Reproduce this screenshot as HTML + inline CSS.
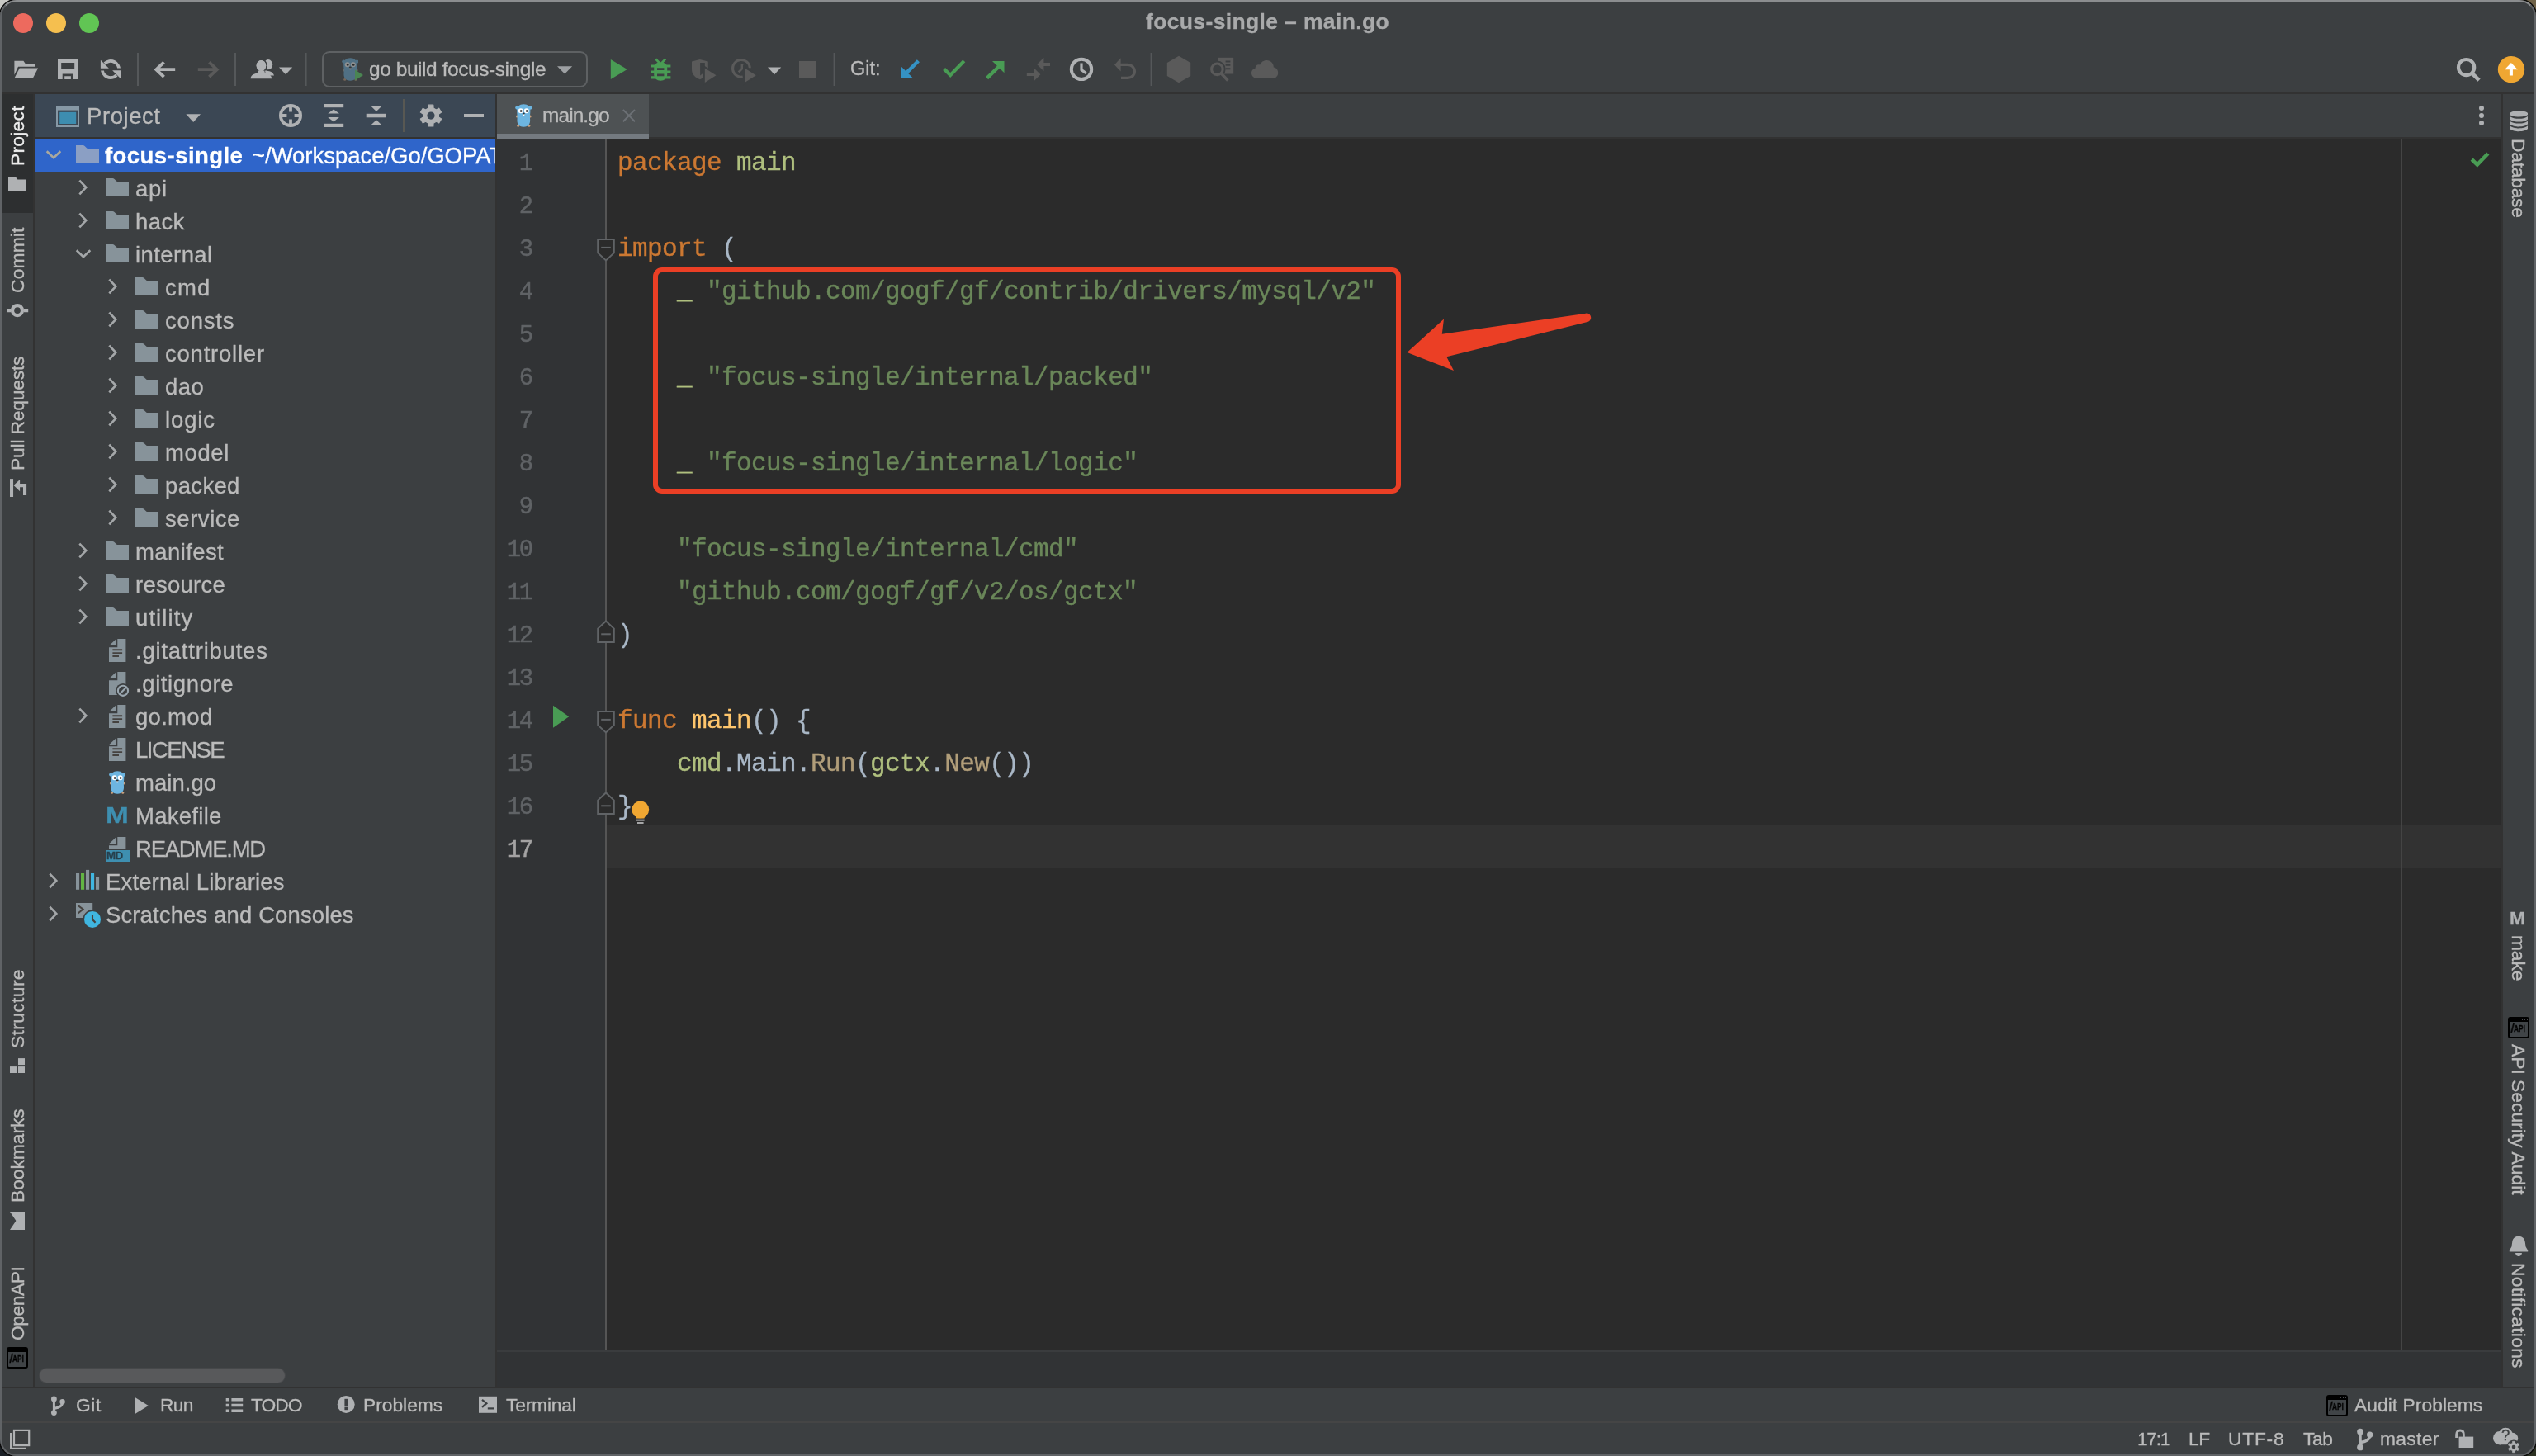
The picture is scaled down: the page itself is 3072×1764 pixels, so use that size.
<!DOCTYPE html>
<html lang="en"><head><meta charset="utf-8"><title>focus-single – main.go</title>
<style>
html,body{margin:0;padding:0;background:#1d2127;}
body{width:3072px;height:1764px;position:relative;overflow:hidden;}
#win{position:absolute;left:0;top:0;width:3072px;height:1764px;border-radius:20px;overflow:hidden;background:#3c3f41;}
.r{position:absolute;display:block;}
.t{position:absolute;white-space:pre;line-height:1;will-change:transform;-webkit-text-stroke:0.3px;}
.cl{will-change:transform;position:absolute;left:748px;white-space:pre;line-height:1;font-family:"Liberation Mono",monospace;font-size:31px;letter-spacing:-0.6px;color:#a9b7c6;-webkit-text-stroke:0.35px;}
.k{color:#cc7832}.s{color:#6a8759}.p{color:#afbf7e}.fd{color:#ffc66d}.fc{color:#b09d79}
.ln{will-change:transform;-webkit-text-stroke:0.45px;position:absolute;white-space:pre;line-height:1;font-family:"Liberation Mono",monospace;color:#606366;text-align:right;}
</style></head><body>
<div class="r" style="left:0px;top:0px;width:40px;height:40px;background:#c9c9c5;"></div>
<div class="r" style="left:3032px;top:0px;width:40px;height:40px;background:#6f6248;"></div>
<div class="r" style="left:0px;top:1724px;width:40px;height:40px;background:#1a1f25;"></div>
<div class="r" style="left:3032px;top:1724px;width:40px;height:40px;background:#2c3122;"></div>
<div id="win">
<div class="r" style="left:0px;top:112px;width:3072px;height:2px;background:#323232;"></div>
<div class="r" style="left:2px;top:114px;width:38px;height:144px;background:#2d2f30;"></div>
<div class="r" style="left:40px;top:114px;width:2px;height:1566px;background:#323232;"></div>
<div class="r" style="left:42px;top:114px;width:558px;height:52px;background:#3b4754;"></div>
<div class="r" style="left:42px;top:166px;width:558px;height:2px;background:#323232;"></div>
<div class="r" style="left:42px;top:168px;width:558px;height:40px;background:#2f65ca;"></div>
<div class="r" style="left:600px;top:114px;width:2px;height:1566px;background:#323232;"></div>
<div class="r" style="left:602px;top:166px;width:2428px;height:2px;background:#323232;"></div>
<div class="r" style="left:602px;top:114px;width:184px;height:48px;background:#4e5254;"></div>
<div class="r" style="left:602px;top:162px;width:184px;height:6px;background:#747a80;"></div>
<div class="r" style="left:602px;top:168px;width:131px;height:1468px;background:#313335;"></div>
<div class="r" style="left:735px;top:168px;width:2295px;height:1468px;background:#2b2b2b;"></div>
<div class="r" style="left:733px;top:168px;width:2px;height:1468px;background:#555555;"></div>
<div class="r" style="left:735px;top:1000px;width:2295px;height:52px;background:#323232;"></div>
<div class="r" style="left:2908px;top:168px;width:2px;height:1468px;background:#444444;"></div>
<div class="r" style="left:602px;top:1636px;width:2428px;height:2px;background:#3a3c3e;"></div>
<div class="r" style="left:602px;top:1638px;width:2428px;height:42px;background:#313335;"></div>
<div class="r" style="left:3030px;top:114px;width:2px;height:1566px;background:#323232;"></div>
<div class="r" style="left:0px;top:1680px;width:3072px;height:2px;background:#323232;"></div>
<div class="r" style="left:0px;top:1722px;width:3072px;height:2px;background:#454545;"></div>
<svg class="r" style="left:53px;top:178.6px;" width="24" height="16" viewBox="0 0 24 16"><path d="M3.7 4.3 L12 12.3 L20.3 4.3" fill="none" stroke="#aaa89e" stroke-width="2.6"/></svg>
<svg class="r" style="left:92px;top:176.2px;" width="28" height="22" viewBox="0 0 28 22"><path d="M0 0 H8.4 Q9.6 0 10.6 1 L13.2 3.4 Q13.8 3.9 14.6 3.9 H28 V22 H0 Z" fill="#8b9fc4"/></svg>
<span class="t" style="left:127.40px;top:174.52px;font-family:'Liberation Sans',sans-serif;font-size:27.5px;font-weight:700;color:#ffffff;letter-spacing:0.441px;">focus-single</span>
<div class="r" style="left:300px;top:168px;width:300px;height:40px;overflow:hidden">
<span class="t" style="left:5.00px;top:6.52px;font-family:'Liberation Sans',sans-serif;font-size:27.5px;color:#ffffff;letter-spacing:-0.03px;">~/Workspace/Go/GOPATH</span>
</div>
<svg class="r" style="left:92.1px;top:215px;" width="16" height="24" viewBox="0 0 16 24"><path d="M4.3 3.7 L12.3 12 L4.3 20.3" fill="none" stroke="#a4a7a9" stroke-width="2.6"/></svg>
<svg class="r" style="left:128px;top:216px;" width="28" height="22" viewBox="0 0 28 22"><path d="M0 0 H8.4 Q9.6 0 10.6 1 L13.2 3.4 Q13.8 3.9 14.6 3.9 H28 V22 H0 Z" fill="#87939a"/></svg>
<span class="t" style="left:164.10px;top:214.52px;font-family:'Liberation Sans',sans-serif;font-size:27.5px;color:#bbbbbb;letter-spacing:0.752px;">api</span>
<svg class="r" style="left:92.1px;top:255px;" width="16" height="24" viewBox="0 0 16 24"><path d="M4.3 3.7 L12.3 12 L4.3 20.3" fill="none" stroke="#a4a7a9" stroke-width="2.6"/></svg>
<svg class="r" style="left:128px;top:256px;" width="28" height="22" viewBox="0 0 28 22"><path d="M0 0 H8.4 Q9.6 0 10.6 1 L13.2 3.4 Q13.8 3.9 14.6 3.9 H28 V22 H0 Z" fill="#87939a"/></svg>
<span class="t" style="left:164.10px;top:254.52px;font-family:'Liberation Sans',sans-serif;font-size:27.5px;color:#bbbbbb;letter-spacing:0.405px;">hack</span>
<svg class="r" style="left:89px;top:298.6px;" width="24" height="16" viewBox="0 0 24 16"><path d="M3.7 4.3 L12 12.3 L20.3 4.3" fill="none" stroke="#a4a7a9" stroke-width="2.6"/></svg>
<svg class="r" style="left:128px;top:296px;" width="28" height="22" viewBox="0 0 28 22"><path d="M0 0 H8.4 Q9.6 0 10.6 1 L13.2 3.4 Q13.8 3.9 14.6 3.9 H28 V22 H0 Z" fill="#87939a"/></svg>
<span class="t" style="left:164.10px;top:294.52px;font-family:'Liberation Sans',sans-serif;font-size:27.5px;color:#bbbbbb;letter-spacing:0.430px;">internal</span>
<svg class="r" style="left:128.1px;top:335px;" width="16" height="24" viewBox="0 0 16 24"><path d="M4.3 3.7 L12.3 12 L4.3 20.3" fill="none" stroke="#a4a7a9" stroke-width="2.6"/></svg>
<svg class="r" style="left:164px;top:336px;" width="28" height="22" viewBox="0 0 28 22"><path d="M0 0 H8.4 Q9.6 0 10.6 1 L13.2 3.4 Q13.8 3.9 14.6 3.9 H28 V22 H0 Z" fill="#87939a"/></svg>
<span class="t" style="left:200.10px;top:334.52px;font-family:'Liberation Sans',sans-serif;font-size:27.5px;color:#bbbbbb;letter-spacing:1.225px;">cmd</span>
<svg class="r" style="left:128.1px;top:375px;" width="16" height="24" viewBox="0 0 16 24"><path d="M4.3 3.7 L12.3 12 L4.3 20.3" fill="none" stroke="#a4a7a9" stroke-width="2.6"/></svg>
<svg class="r" style="left:164px;top:376px;" width="28" height="22" viewBox="0 0 28 22"><path d="M0 0 H8.4 Q9.6 0 10.6 1 L13.2 3.4 Q13.8 3.9 14.6 3.9 H28 V22 H0 Z" fill="#87939a"/></svg>
<span class="t" style="left:200.10px;top:374.52px;font-family:'Liberation Sans',sans-serif;font-size:27.5px;color:#bbbbbb;letter-spacing:0.805px;">consts</span>
<svg class="r" style="left:128.1px;top:415px;" width="16" height="24" viewBox="0 0 16 24"><path d="M4.3 3.7 L12.3 12 L4.3 20.3" fill="none" stroke="#a4a7a9" stroke-width="2.6"/></svg>
<svg class="r" style="left:164px;top:416px;" width="28" height="22" viewBox="0 0 28 22"><path d="M0 0 H8.4 Q9.6 0 10.6 1 L13.2 3.4 Q13.8 3.9 14.6 3.9 H28 V22 H0 Z" fill="#87939a"/></svg>
<span class="t" style="left:200.10px;top:414.52px;font-family:'Liberation Sans',sans-serif;font-size:27.5px;color:#bbbbbb;letter-spacing:0.778px;">controller</span>
<svg class="r" style="left:128.1px;top:455px;" width="16" height="24" viewBox="0 0 16 24"><path d="M4.3 3.7 L12.3 12 L4.3 20.3" fill="none" stroke="#a4a7a9" stroke-width="2.6"/></svg>
<svg class="r" style="left:164px;top:456px;" width="28" height="22" viewBox="0 0 28 22"><path d="M0 0 H8.4 Q9.6 0 10.6 1 L13.2 3.4 Q13.8 3.9 14.6 3.9 H28 V22 H0 Z" fill="#87939a"/></svg>
<span class="t" style="left:200.10px;top:454.52px;font-family:'Liberation Sans',sans-serif;font-size:27.5px;color:#bbbbbb;letter-spacing:0.511px;">dao</span>
<svg class="r" style="left:128.1px;top:495px;" width="16" height="24" viewBox="0 0 16 24"><path d="M4.3 3.7 L12.3 12 L4.3 20.3" fill="none" stroke="#a4a7a9" stroke-width="2.6"/></svg>
<svg class="r" style="left:164px;top:496px;" width="28" height="22" viewBox="0 0 28 22"><path d="M0 0 H8.4 Q9.6 0 10.6 1 L13.2 3.4 Q13.8 3.9 14.6 3.9 H28 V22 H0 Z" fill="#87939a"/></svg>
<span class="t" style="left:200.10px;top:494.52px;font-family:'Liberation Sans',sans-serif;font-size:27.5px;color:#bbbbbb;letter-spacing:0.861px;">logic</span>
<svg class="r" style="left:128.1px;top:535px;" width="16" height="24" viewBox="0 0 16 24"><path d="M4.3 3.7 L12.3 12 L4.3 20.3" fill="none" stroke="#a4a7a9" stroke-width="2.6"/></svg>
<svg class="r" style="left:164px;top:536px;" width="28" height="22" viewBox="0 0 28 22"><path d="M0 0 H8.4 Q9.6 0 10.6 1 L13.2 3.4 Q13.8 3.9 14.6 3.9 H28 V22 H0 Z" fill="#87939a"/></svg>
<span class="t" style="left:200.10px;top:534.52px;font-family:'Liberation Sans',sans-serif;font-size:27.5px;color:#bbbbbb;letter-spacing:0.601px;">model</span>
<svg class="r" style="left:128.1px;top:575px;" width="16" height="24" viewBox="0 0 16 24"><path d="M4.3 3.7 L12.3 12 L4.3 20.3" fill="none" stroke="#a4a7a9" stroke-width="2.6"/></svg>
<svg class="r" style="left:164px;top:576px;" width="28" height="22" viewBox="0 0 28 22"><path d="M0 0 H8.4 Q9.6 0 10.6 1 L13.2 3.4 Q13.8 3.9 14.6 3.9 H28 V22 H0 Z" fill="#87939a"/></svg>
<span class="t" style="left:200.10px;top:574.52px;font-family:'Liberation Sans',sans-serif;font-size:27.5px;color:#bbbbbb;letter-spacing:0.346px;">packed</span>
<svg class="r" style="left:128.1px;top:615px;" width="16" height="24" viewBox="0 0 16 24"><path d="M4.3 3.7 L12.3 12 L4.3 20.3" fill="none" stroke="#a4a7a9" stroke-width="2.6"/></svg>
<svg class="r" style="left:164px;top:616px;" width="28" height="22" viewBox="0 0 28 22"><path d="M0 0 H8.4 Q9.6 0 10.6 1 L13.2 3.4 Q13.8 3.9 14.6 3.9 H28 V22 H0 Z" fill="#87939a"/></svg>
<span class="t" style="left:200.10px;top:614.52px;font-family:'Liberation Sans',sans-serif;font-size:27.5px;color:#bbbbbb;letter-spacing:0.550px;">service</span>
<svg class="r" style="left:92.1px;top:655px;" width="16" height="24" viewBox="0 0 16 24"><path d="M4.3 3.7 L12.3 12 L4.3 20.3" fill="none" stroke="#a4a7a9" stroke-width="2.6"/></svg>
<svg class="r" style="left:128px;top:656px;" width="28" height="22" viewBox="0 0 28 22"><path d="M0 0 H8.4 Q9.6 0 10.6 1 L13.2 3.4 Q13.8 3.9 14.6 3.9 H28 V22 H0 Z" fill="#87939a"/></svg>
<span class="t" style="left:164.10px;top:654.52px;font-family:'Liberation Sans',sans-serif;font-size:27.5px;color:#bbbbbb;letter-spacing:0.397px;">manifest</span>
<svg class="r" style="left:92.1px;top:695px;" width="16" height="24" viewBox="0 0 16 24"><path d="M4.3 3.7 L12.3 12 L4.3 20.3" fill="none" stroke="#a4a7a9" stroke-width="2.6"/></svg>
<svg class="r" style="left:128px;top:696px;" width="28" height="22" viewBox="0 0 28 22"><path d="M0 0 H8.4 Q9.6 0 10.6 1 L13.2 3.4 Q13.8 3.9 14.6 3.9 H28 V22 H0 Z" fill="#87939a"/></svg>
<span class="t" style="left:164.10px;top:694.52px;font-family:'Liberation Sans',sans-serif;font-size:27.5px;color:#bbbbbb;letter-spacing:0.245px;">resource</span>
<svg class="r" style="left:92.1px;top:735px;" width="16" height="24" viewBox="0 0 16 24"><path d="M4.3 3.7 L12.3 12 L4.3 20.3" fill="none" stroke="#a4a7a9" stroke-width="2.6"/></svg>
<svg class="r" style="left:128px;top:736px;" width="28" height="22" viewBox="0 0 28 22"><path d="M0 0 H8.4 Q9.6 0 10.6 1 L13.2 3.4 Q13.8 3.9 14.6 3.9 H28 V22 H0 Z" fill="#87939a"/></svg>
<span class="t" style="left:164.10px;top:734.52px;font-family:'Liberation Sans',sans-serif;font-size:27.5px;color:#bbbbbb;letter-spacing:1.091px;">utility</span>
<svg class="r" style="left:131.8px;top:774px;" width="21" height="28" viewBox="0 0 21 28"><path d="M10.3 0 H20.4 V28 H0 V10.3 H10.3 Z" fill="#87939a"/><path d="M0.4 8 L8.3 0.6 V8 Z" fill="#87939a"/><path d="M4.4 13.2 H16.1 M4.4 17.1 H16.1 M4.4 21 H12" stroke="#45423f" stroke-width="1.9" fill="none"/></svg>
<span class="t" style="left:164.10px;top:774.52px;font-family:'Liberation Sans',sans-serif;font-size:27.5px;color:#bbbbbb;letter-spacing:0.778px;">.gitattributes</span>
<svg class="r" style="left:131.8px;top:814px;" width="26" height="32" viewBox="0 0 26 32"><path d="M10.3 0 H20.4 V28 H0 V10.3 H10.3 Z" fill="#87939a"/><path d="M0.4 8 L8.3 0.6 V8 Z" fill="#87939a"/><circle cx="17" cy="22.8" r="8.9" fill="#3c3f41"/><circle cx="17" cy="22.8" r="6.1" fill="none" stroke="#9aa7b0" stroke-width="2.1"/><path d="M12.8 27 L21.2 18.6" stroke="#9aa7b0" stroke-width="2.1"/></svg>
<span class="t" style="left:164.10px;top:814.52px;font-family:'Liberation Sans',sans-serif;font-size:27.5px;color:#bbbbbb;letter-spacing:0.609px;">.gitignore</span>
<svg class="r" style="left:92.1px;top:855px;" width="16" height="24" viewBox="0 0 16 24"><path d="M4.3 3.7 L12.3 12 L4.3 20.3" fill="none" stroke="#a4a7a9" stroke-width="2.6"/></svg>
<svg class="r" style="left:131.8px;top:854px;" width="21" height="28" viewBox="0 0 21 28"><path d="M10.3 0 H20.4 V28 H0 V10.3 H10.3 Z" fill="#87939a"/><path d="M0.4 8 L8.3 0.6 V8 Z" fill="#87939a"/><path d="M4.4 13.2 H16.1 M4.4 17.1 H16.1 M4.4 21 H12" stroke="#45423f" stroke-width="1.9" fill="none"/></svg>
<span class="t" style="left:164.10px;top:854.52px;font-family:'Liberation Sans',sans-serif;font-size:27.5px;color:#bbbbbb;letter-spacing:0.297px;">go.mod</span>
<svg class="r" style="left:131.8px;top:894px;" width="21" height="28" viewBox="0 0 21 28"><path d="M10.3 0 H20.4 V28 H0 V10.3 H10.3 Z" fill="#87939a"/><path d="M0.4 8 L8.3 0.6 V8 Z" fill="#87939a"/><path d="M4.4 13.2 H16.1 M4.4 17.1 H16.1 M4.4 21 H12" stroke="#45423f" stroke-width="1.9" fill="none"/></svg>
<span class="t" style="left:164.10px;top:894.52px;font-family:'Liberation Sans',sans-serif;font-size:27.5px;color:#bbbbbb;letter-spacing:-1.497px;">LICENSE</span>
<svg class="r" style="left:131.8px;top:934px;" width="20.4" height="28" viewBox="0 0 20.4 28"><g><ellipse cx="2.2" cy="15" rx="1.3" ry="1.5" fill="#c8a07e"/><ellipse cx="18.2" cy="15" rx="1.3" ry="1.5" fill="#c8a07e"/><ellipse cx="3.6" cy="26.4" rx="1.5" ry="1.3" fill="#c8a07e"/><ellipse cx="16.8" cy="26.4" rx="1.5" ry="1.3" fill="#c8a07e"/><circle cx="2.2" cy="4.6" r="2.1" fill="#6db5e0"/><circle cx="18.2" cy="4.6" r="2.1" fill="#6db5e0"/><path d="M10.2 0.3 C15.5 0.3 18.3 3.4 18.3 8 C18.3 11.5 17.6 14 18 18.5 C18.4 23.5 16.5 27.7 10.2 27.7 C3.9 27.7 2 23.5 2.4 18.5 C2.8 14 2.1 11.5 2.1 8 C2.1 3.4 4.9 0.3 10.2 0.3 Z" fill="#6db5e0"/><circle cx="6.7" cy="8.3" r="3" fill="#fff"/><circle cx="13.7" cy="8.3" r="3" fill="#fff"/><circle cx="7.1" cy="8.5" r="1.35" fill="#111"/><circle cx="14.1" cy="8.5" r="1.35" fill="#111"/><rect x="9.3" y="12" width="1.9" height="2.3" rx="0.5" fill="#fff"/><ellipse cx="10.2" cy="11.6" rx="1.5" ry="1" fill="#2a2a2a"/><ellipse cx="10.2" cy="12.2" rx="2.1" ry="0.9" fill="#c8a07e" opacity="0.0"/></g></svg>
<span class="t" style="left:164.10px;top:934.52px;font-family:'Liberation Sans',sans-serif;font-size:27.5px;color:#bbbbbb;letter-spacing:0.046px;">main.go</span>
<span class="t" style="left:127.60px;top:974.29px;font-family:'Liberation Sans',sans-serif;font-size:28px;font-weight:700;color:#3e8fb0;transform:scaleX(1.19);transform-origin:0 0;">M</span>
<span class="t" style="left:164.10px;top:974.52px;font-family:'Liberation Sans',sans-serif;font-size:27.5px;color:#bbbbbb;letter-spacing:0.272px;">Makefile</span>
<svg class="r" style="left:131.8px;top:1014px;" width="21" height="15" viewBox="0 0 21 15"><path d="M10.3 0 H20.4 V14 H0 V10.3 H10.3 Z" fill="#87939a"/><path d="M0.4 8 L8.3 0.6 V8 Z" fill="#87939a"/></svg>
<div class="r" style="left:128px;top:1030px;width:30px;height:14px;background:#3e8fb0;"></div>
<span class="t" style="left:129.40px;top:1030.45px;font-family:'Liberation Sans',sans-serif;font-size:13.4px;font-weight:700;color:#27404d;letter-spacing:-0.639px;">MD</span>
<span class="t" style="left:164.10px;top:1014.52px;font-family:'Liberation Sans',sans-serif;font-size:27.5px;color:#bbbbbb;letter-spacing:-1.233px;">README.MD</span>
<svg class="r" style="left:55.8px;top:1055px;" width="16" height="24" viewBox="0 0 16 24"><path d="M4.3 3.7 L12.3 12 L4.3 20.3" fill="none" stroke="#a4a7a9" stroke-width="2.6"/></svg>
<svg class="r" style="left:92px;top:1053px;" width="29" height="26" viewBox="0 0 29 26"><rect x="0" y="5" width="4.1" height="19.8" fill="#87939a"/><rect x="6" y="5" width="4.1" height="19.8" fill="#62b543"/><rect x="12" y="0.9" width="4.1" height="23.9" fill="#87939a"/><rect x="18" y="5" width="4.1" height="19.8" fill="#40b6e0"/><rect x="24" y="9" width="4.1" height="15.8" fill="#87939a"/></svg>
<span class="t" style="left:128.10px;top:1054.52px;font-family:'Liberation Sans',sans-serif;font-size:27.5px;color:#bbbbbb;letter-spacing:0.149px;">External Libraries</span>
<svg class="r" style="left:55.8px;top:1095px;" width="16" height="24" viewBox="0 0 16 24"><path d="M4.3 3.7 L12.3 12 L4.3 20.3" fill="none" stroke="#a4a7a9" stroke-width="2.6"/></svg>
<svg class="r" style="left:92px;top:1093px;" width="32" height="32" viewBox="0 0 32 32"><rect x="0" y="1" width="20.2" height="18" fill="#87939a"/><path d="M2.5 4 L8.6 8.6 L2.5 13.5" fill="none" stroke="#45423f" stroke-width="2"/><circle cx="20" cy="20.9" r="11.6" fill="#3c3f41"/><circle cx="20" cy="20.9" r="10" fill="#40b6e0"/><path d="M20 15.4 V21 L23.6 24.8" fill="none" stroke="#45423f" stroke-width="2.1"/></svg>
<span class="t" style="left:128.10px;top:1094.52px;font-family:'Liberation Sans',sans-serif;font-size:27.5px;color:#bbbbbb;letter-spacing:0.121px;">Scratches and Consoles</span>
<svg class="r" style="left:68px;top:128px;" width="28" height="26" viewBox="0 0 28 26"><rect x="1" y="1" width="26" height="24" fill="none" stroke="#8698a5" stroke-width="2"/><rect x="0" y="0" width="28" height="5.6" fill="#8698a5"/><rect x="4.2" y="7.8" width="20" height="14.2" fill="#3d8db0"/></svg>
<span class="t" style="left:105.20px;top:126.72px;font-family:'Liberation Sans',sans-serif;font-size:27.5px;color:#bbbbbb;letter-spacing:0.569px;">Project</span>
<svg class="r" style="left:224px;top:136px;" width="20" height="14" viewBox="0 0 20 14"><path d="M1.4 2.2 H19 L10.2 12 Z" fill="#afb1b3"/></svg>
<svg class="r" style="left:336px;top:124px;" width="32" height="32" viewBox="0 0 32 32"><circle cx="16" cy="16" r="12.1" fill="none" stroke="#afb1b3" stroke-width="3.8"/><path d="M16 4 V11.4 M16 20.6 V28 M4 16 H11.4 M20.6 16 H28" stroke="#afb1b3" stroke-width="3.8" fill="none"/></svg>
<svg class="r" style="left:390px;top:124px;" width="28" height="32" viewBox="0 0 28 32"><rect x="2" y="2" width="24.2" height="4.2" fill="#afb1b3"/><rect x="2" y="25.8" width="24.2" height="4.2" fill="#afb1b3"/><path d="M7.2 13.6 L14.1 8.6 L21 13.6 Z M7.2 18 L14.1 23.6 L21 18 Z" fill="#afb1b3"/></svg>
<svg class="r" style="left:442px;top:124px;" width="28" height="32" viewBox="0 0 28 32"><rect x="1.7" y="13.8" width="24.3" height="4.5" fill="#afb1b3"/><path d="M6.8 4.1 H21 L13.9 11 Z M6.8 28 H21 L13.9 21.2 Z" fill="#afb1b3"/></svg>
<div class="r" style="left:488px;top:120px;width:2px;height:40px;background:#585853;"></div>
<svg class="r" style="left:506px;top:124px;" width="32" height="32" viewBox="0 0 32 32"><path d="M12.98 6.99 L13.16 3.21 L18.84 3.21 L19.02 6.99 L22.38 8.93 L25.74 7.20 L28.58 12.11 L25.40 14.16 L25.40 18.04 L28.58 20.09 L25.74 25.00 L22.38 23.27 L19.02 25.21 L18.84 28.99 L13.16 28.99 L12.98 25.21 L9.62 23.27 L6.26 25.00 L3.42 20.09 L6.60 18.04 L6.60 14.16 L3.42 12.11 L6.26 7.20 L9.62 8.93 Z" fill="#afb1b3" stroke="#afb1b3" stroke-width="1.2" stroke-linejoin="round"/><circle cx="16" cy="16.1" r="4.6" fill="#3b4754"/></svg>
<div class="r" style="left:561.7px;top:137.7px;width:24.6px;height:4.6px;background:#afb1b3;"></div>
<div class="r" style="left:48px;top:1657.5px;width:296.5px;height:17px;border-radius:9px;background:#58595b;box-shadow:0 0 0 1px #46484a;"></div>
<div class="r" style="left:16.0px;top:16.0px;width:24.4px;height:24.4px;border-radius:50%;background:#ed6a5e"></div>
<div class="r" style="left:56.0px;top:16.0px;width:24.4px;height:24.4px;border-radius:50%;background:#f5bf4f"></div>
<div class="r" style="left:96.0px;top:16.0px;width:24.4px;height:24.4px;border-radius:50%;background:#61c554"></div>
<span class="t" style="left:1388.40px;top:13.16px;font-family:'Liberation Sans',sans-serif;font-size:26.5px;font-weight:700;color:#a9aaab;letter-spacing:0.357px;">focus-single – main.go</span>
<svg class="r" style="left:0px;top:56px;" width="3072" height="56" viewBox="0 56 3072 56"><path d="M17.4 73.7 H28.4 L31 77.6 H42.3 V80.8 H22 L17.4 90.7 Z" fill="#afb1b3" /><path d="M23.7 82.4 H46.1 L40.2 94 H17.8 Z" fill="#afb1b3" /><path d="M70 72 H94 V96 H70 Z M74.2 75.9 V84 H90.2 V75.9 Z M75.7 89.6 V96 H88.3 V89.6 Z" fill="#afb1b3" fill-rule="evenodd"/><path d="M78.2 92.2 H85.9 V96 H78.2 Z" fill="#afb1b3" /><clipPath id="rfa"><rect x="118" y="66" width="32" height="16.4"/></clipPath><clipPath id="rfb"><rect x="118" y="85.5" width="32" height="16"/></clipPath><path d="M126.89 76.89 A10.05 10.05 0 0 1 143.95 85.40" fill="none" stroke="#afb1b3" stroke-width="3.9" clip-path="url(#rfa)"/><path d="M141.11 91.11 A10.05 10.05 0 0 1 124.05 82.60" fill="none" stroke="#afb1b3" stroke-width="3.9" clip-path="url(#rfb)"/><path d="M121.9 72.7 V82.7 H131.9 Z" fill="#afb1b3" /><path d="M146.1 95.3 V85.3 H136.1 Z" fill="#afb1b3" /><rect x="166" y="64" width="2" height="40" fill="#55585a"/><rect x="284" y="64" width="2" height="40" fill="#55585a"/><rect x="369.6" y="64" width="2" height="40" fill="#55585a"/><rect x="1009.6" y="64" width="2" height="40" fill="#55585a"/><rect x="1393.6" y="64" width="2" height="40" fill="#55585a"/><path d="M212.2 84.2 H189.5 M198.6 75.3 L189.2 84.2 L198.6 93.1" fill="none" stroke="#afb1b3" stroke-width="3.8" /><path d="M239.8 84.2 H262.5 M253.4 75.3 L262.8 84.2 L253.4 93.1" fill="none" stroke="#5a5a5a" stroke-width="3.8" /><ellipse cx="324.9" cy="78.2" rx="5.3" ry="6.1" fill="#afb1b3"/><path d="M321 85.2 C326 86 330.6 86.6 332 91.4 H322 Z" fill="#afb1b3" /><ellipse cx="316.4" cy="79.5" rx="6.6" ry="7.3" fill="#afb1b3" stroke="#3c3f41" stroke-width="1.6"/><path d="M303.6 95.3 C303.9 91.2 306.5 90.2 310.5 88.8 C312 88.2 312.4 87.2 312.4 85.4 H320.4 C320.4 87.2 320.8 88.2 322.3 88.8 C326.3 90.2 328.9 91.2 329.2 95.3 Z" fill="#afb1b3" /><ellipse cx="316.4" cy="79.5" rx="5.8" ry="6.5" fill="#afb1b3"/><path d="M338 81.6 H354.2 L346.1 90.2 Z" fill="#afb1b3" /><rect x="391" y="63" width="320" height="42" rx="8" ry="8" fill="none" stroke="#5e6163" stroke-width="2"/><path d="M675 80.2 H693.2 L684.1 89.6 Z" fill="#9da0a3" /><path d="M739.8 72 L759.8 84 L739.8 96 Z" fill="#499c54" /><path d="M788 78.5 H812.4 V81.6 H788 Z M788 85.5 H812.4 V88.7 H788 Z M788 92.3 H812.4 V95.4 H788 Z" fill="#499c54" /><path d="M794.2 71.4 L799 76.4 M806.2 71.4 L801.4 76.4" fill="none" stroke="#499c54" stroke-width="2.8" /><path d="M800.2 75.2 C805.4 75.2 808.2 78.4 808.2 82 V90 C808.2 94.6 804.8 97.7 800.2 97.7 C795.6 97.7 792.2 94.6 792.2 90 V82 C792.2 78.4 795 75.2 800.2 75.2 Z" fill="#499c54" /><path d="M796 82.3 H804.4 V85 H796 Z M796 89.5 H804.4 V92.2 H796 Z" fill="#3c3f41" /><path d="M847.8 72.1 L857.8 74.4 V84 C857.8 90 853.6 94 847.8 96.2 C842 94 838 90 838 84 V74.4 Z" fill="#5a5a5a" /><path d="M848.1 76.1 H853.8 V87 L848.1 91.6 Z" fill="#3c3f41" /><path d="M853.8 82.5 L867.5 91.2 L853.8 99.9 Z" fill="#5a5a5a" stroke="#3c3f41" stroke-width="4" paint-order="stroke" stroke-linejoin="miter"/><path d="M899.71 93.04 A10.4 10.4 0 1 1 908.29 82.26" fill="none" stroke="#5a5a5a" stroke-width="3" /><path d="M899 77 V82.9 L894.8 87.4" fill="none" stroke="#5a5a5a" stroke-width="2.8" /><path d="M902 82.5 L915.8 91.2 L902 99.9 Z" fill="#5a5a5a" stroke="#3c3f41" stroke-width="4" paint-order="stroke" stroke-linejoin="miter"/><path d="M930 81.6 H946.2 L938.1 90.2 Z" fill="#afb1b3" /><path d="M968 74 H988 V94 H968 Z" fill="#5a5a5a" /><path d="M1112.4 73.8 L1097.6 88.6" fill="none" stroke="#3592c4" stroke-width="4.4" /><path d="M1091.6 80.6 V94.3 H1105.6 Z" fill="#3592c4" /><path d="M1143.6 83.4 L1151.2 91 L1167.8 73.9" fill="none" stroke="#499c54" stroke-width="4.2" /><path d="M1195.6 94.6 L1210.6 80" fill="none" stroke="#499c54" stroke-width="4.4" /><path d="M1202 74 H1216.5 V88.2 Z" fill="#499c54" /><path d="M1256.2 78 L1264.4 69.8 V76.1 H1272 V79.9 H1264.4 V86.2 Z" fill="#5a5a5a" /><path d="M1260.4 90.2 L1252.2 82 V88.3 H1243.8 V92.1 H1252.2 V98.4 Z" fill="#5a5a5a" /><circle cx="1310" cy="83.9" r="12.2" fill="none" stroke="#afb1b3" stroke-width="4"/><path d="M1310 76.6 V84.6 L1315.6 88.6" fill="none" stroke="#afb1b3" stroke-width="3.2" /><path d="M1350 78.4 L1357.6 70.2 V86.6 Z" fill="#5a5a5a" /><path d="M1357 78.4 H1366.2 C1371.2 78.4 1374.4 82.2 1374.4 86.4 C1374.4 90.8 1371.2 94.4 1366.2 94.4 H1358" fill="none" stroke="#5a5a5a" stroke-width="3.4" /><path d="M1428 67.8 L1442.2 75.9 V92.1 L1428 100.2 L1413.8 92.1 V75.9 Z" fill="#5a5a5a" /><path d="M1476 69.8 H1494.2 V89.5 H1476 Z" fill="#5a5a5a" /><path d="M1484.6 74.4 H1490.4 M1484.6 78.8 H1490.4 M1484.6 83.2 H1490.4" fill="none" stroke="#3c3f41" stroke-width="2" /><circle cx="1474.4" cy="83.8" r="10.2" fill="#3c3f41"/><circle cx="1474.4" cy="83.8" r="6.8" fill="none" stroke="#5a5a5a" stroke-width="3.1"/><path d="M1479.4 89 L1487.4 97.4" fill="none" stroke="#5a5a5a" stroke-width="3.6" /><path d="M1523.2 95 C1518.6 95 1516 92 1516 88.6 C1516 85.2 1518.4 83.2 1520.6 82.8 C1520.4 79.4 1523.4 77.2 1526.2 78.6 C1527.4 75.2 1530.6 72.9 1534.4 72.9 C1539.6 72.9 1543 76.8 1542.8 81.6 C1546 82 1548.2 84.8 1548.2 88.2 C1548.2 92 1545.4 95 1541.4 95 Z" fill="#5a5a5a" /><circle cx="2987.6" cy="81.6" r="9.6" fill="none" stroke="#afb1b3" stroke-width="4.2"/><path d="M2994.6 88.8 L3003 97.2" fill="none" stroke="#afb1b3" stroke-width="4.6" /><circle cx="3042" cy="84.1" r="16.2" fill="#f0a732"/><path d="M3034 84.2 L3041.9 76 L3049.8 84.2 H3043.9 V91.6 H3039.9 V84.2 Z" fill="#ffffff" /></svg>
<svg class="r" style="left:413.9px;top:70px;opacity:0.42;" width="20.6" height="28" viewBox="0 0 20.4 28"><g><ellipse cx="2.2" cy="15" rx="1.3" ry="1.5" fill="#c8a07e"/><ellipse cx="18.2" cy="15" rx="1.3" ry="1.5" fill="#c8a07e"/><ellipse cx="3.6" cy="26.4" rx="1.5" ry="1.3" fill="#c8a07e"/><ellipse cx="16.8" cy="26.4" rx="1.5" ry="1.3" fill="#c8a07e"/><circle cx="2.2" cy="4.6" r="2.1" fill="#6db5e0"/><circle cx="18.2" cy="4.6" r="2.1" fill="#6db5e0"/><path d="M10.2 0.3 C15.5 0.3 18.3 3.4 18.3 8 C18.3 11.5 17.6 14 18 18.5 C18.4 23.5 16.5 27.7 10.2 27.7 C3.9 27.7 2 23.5 2.4 18.5 C2.8 14 2.1 11.5 2.1 8 C2.1 3.4 4.9 0.3 10.2 0.3 Z" fill="#6db5e0"/><circle cx="6.7" cy="8.3" r="3" fill="#fff"/><circle cx="13.7" cy="8.3" r="3" fill="#fff"/><circle cx="7.1" cy="8.5" r="1.35" fill="#111"/><circle cx="14.1" cy="8.5" r="1.35" fill="#111"/><rect x="9.3" y="12" width="1.9" height="2.3" rx="0.5" fill="#fff"/><ellipse cx="10.2" cy="11.6" rx="1.5" ry="1" fill="#2a2a2a"/><ellipse cx="10.2" cy="12.2" rx="2.1" ry="0.9" fill="#c8a07e" opacity="0.0"/></g></svg>
<svg class="r" style="left:429px;top:84px;" width="12" height="14" viewBox="0 0 12 14"><path d="M1 0.4 L11 7 L1 13.6 Z" fill="#4a8552"/></svg>
<span class="t" style="left:447.20px;top:72.26px;font-family:'Liberation Sans',sans-serif;font-size:24.5px;color:#bbbbbb;letter-spacing:-0.442px;">go build focus-single</span>
<span class="t" style="left:1029.60px;top:72.40px;font-family:'Liberation Sans',sans-serif;font-size:23.5px;color:#bbbbbb;letter-spacing:-0.019px;">Git:</span>
<svg class="r" style="left:623.6px;top:126px;" width="20.6" height="28" viewBox="0 0 20.4 28"><g><ellipse cx="2.2" cy="15" rx="1.3" ry="1.5" fill="#c8a07e"/><ellipse cx="18.2" cy="15" rx="1.3" ry="1.5" fill="#c8a07e"/><ellipse cx="3.6" cy="26.4" rx="1.5" ry="1.3" fill="#c8a07e"/><ellipse cx="16.8" cy="26.4" rx="1.5" ry="1.3" fill="#c8a07e"/><circle cx="2.2" cy="4.6" r="2.1" fill="#6db5e0"/><circle cx="18.2" cy="4.6" r="2.1" fill="#6db5e0"/><path d="M10.2 0.3 C15.5 0.3 18.3 3.4 18.3 8 C18.3 11.5 17.6 14 18 18.5 C18.4 23.5 16.5 27.7 10.2 27.7 C3.9 27.7 2 23.5 2.4 18.5 C2.8 14 2.1 11.5 2.1 8 C2.1 3.4 4.9 0.3 10.2 0.3 Z" fill="#6db5e0"/><circle cx="6.7" cy="8.3" r="3" fill="#fff"/><circle cx="13.7" cy="8.3" r="3" fill="#fff"/><circle cx="7.1" cy="8.5" r="1.35" fill="#111"/><circle cx="14.1" cy="8.5" r="1.35" fill="#111"/><rect x="9.3" y="12" width="1.9" height="2.3" rx="0.5" fill="#fff"/><ellipse cx="10.2" cy="11.6" rx="1.5" ry="1" fill="#2a2a2a"/><ellipse cx="10.2" cy="12.2" rx="2.1" ry="0.9" fill="#c8a07e" opacity="0.0"/></g></svg>
<span class="t" style="left:657.20px;top:127.56px;font-family:'Liberation Sans',sans-serif;font-size:24.5px;color:#bbbbbb;letter-spacing:-0.942px;">main.go</span>
<svg class="r" style="left:752px;top:130px;" width="20" height="20" viewBox="0 0 20 20"><path d="M2.8 3 L17 17.2 M17 3 L2.8 17.2" fill="none" stroke="#6c7075" stroke-width="2"/></svg>
<div class="r" style="left:3002.8px;top:127.7px;width:6.4px;height:6.4px;border-radius:50%;background:#afb1b3"></div>
<div class="r" style="left:3002.8px;top:136.70000000000002px;width:6.4px;height:6.4px;border-radius:50%;background:#afb1b3"></div>
<div class="r" style="left:3002.8px;top:145.8px;width:6.4px;height:6.4px;border-radius:50%;background:#afb1b3"></div>
<svg class="r" style="left:2990px;top:180px;" width="30" height="26" viewBox="0 0 30 26"><path d="M4.2 13.2 L10.8 19.6 L23.8 6" fill="none" stroke="#499c54" stroke-width="4.6"/></svg>
<div class="cl" style="top:182.25px"><span class="k">package</span> <span class="p">main</span></div>
<div class="ln" style="left:560px;width:83.6px;top:183.78px;font-size:29px;letter-spacing:-2.5px;color:#606366">1</div>
<div class="ln" style="left:560px;width:83.6px;top:235.78px;font-size:29px;letter-spacing:-2.5px;color:#606366">2</div>
<div class="cl" style="top:286.25px"><span class="k">import</span> (</div>
<div class="ln" style="left:560px;width:83.6px;top:287.78px;font-size:29px;letter-spacing:-2.5px;color:#606366">3</div>
<div class="cl" style="top:338.25px">    <span class="p">_</span> <span class="s">"github.com/gogf/gf/contrib/drivers/mysql/v2"</span></div>
<div class="ln" style="left:560px;width:83.6px;top:339.78px;font-size:29px;letter-spacing:-2.5px;color:#606366">4</div>
<div class="ln" style="left:560px;width:83.6px;top:391.78px;font-size:29px;letter-spacing:-2.5px;color:#606366">5</div>
<div class="cl" style="top:442.25px">    <span class="p">_</span> <span class="s">"focus-single/internal/packed"</span></div>
<div class="ln" style="left:560px;width:83.6px;top:443.78px;font-size:29px;letter-spacing:-2.5px;color:#606366">6</div>
<div class="ln" style="left:560px;width:83.6px;top:495.78px;font-size:29px;letter-spacing:-2.5px;color:#606366">7</div>
<div class="cl" style="top:546.25px">    <span class="p">_</span> <span class="s">"focus-single/internal/logic"</span></div>
<div class="ln" style="left:560px;width:83.6px;top:547.78px;font-size:29px;letter-spacing:-2.5px;color:#606366">8</div>
<div class="ln" style="left:560px;width:83.6px;top:599.78px;font-size:29px;letter-spacing:-2.5px;color:#606366">9</div>
<div class="cl" style="top:650.25px">    <span class="s">"focus-single/internal/cmd"</span></div>
<div class="ln" style="left:560px;width:83.6px;top:651.78px;font-size:29px;letter-spacing:-2.5px;color:#606366">10</div>
<div class="cl" style="top:702.25px">    <span class="s">"github.com/gogf/gf/v2/os/gctx"</span></div>
<div class="ln" style="left:560px;width:83.6px;top:703.78px;font-size:29px;letter-spacing:-2.5px;color:#606366">11</div>
<div class="cl" style="top:754.25px">)</div>
<div class="ln" style="left:560px;width:83.6px;top:755.78px;font-size:29px;letter-spacing:-2.5px;color:#606366">12</div>
<div class="ln" style="left:560px;width:83.6px;top:807.78px;font-size:29px;letter-spacing:-2.5px;color:#606366">13</div>
<div class="cl" style="top:858.25px"><span class="k">func</span> <span class="fd">main</span>() {</div>
<div class="ln" style="left:560px;width:83.6px;top:859.78px;font-size:29px;letter-spacing:-2.5px;color:#606366">14</div>
<div class="cl" style="top:910.25px">    <span class="p">cmd</span>.Main.<span class="fc">Run</span>(<span class="p">gctx</span>.<span class="fc">New</span>())</div>
<div class="ln" style="left:560px;width:83.6px;top:911.78px;font-size:29px;letter-spacing:-2.5px;color:#606366">15</div>
<div class="cl" style="top:962.25px">}</div>
<div class="ln" style="left:560px;width:83.6px;top:963.78px;font-size:29px;letter-spacing:-2.5px;color:#606366">16</div>
<div class="ln" style="left:560px;width:83.6px;top:1015.78px;font-size:29px;letter-spacing:-2.5px;color:#a4a3a3">17</div>
<div class="r" style="left:791px;top:324px;width:894px;height:262px;border:6px solid #eb3f25;border-radius:11px;"></div>
<svg class="r" style="left:1690px;top:360px;" width="260" height="110" viewBox="0 0 260 110"><path d="M14.5 67.1 L59 26.5 L56.8 44.7 L229.6 19.9 A5.3 5.3 0 0 1 234 29.8 L62.3 72.3 L71 88.9 Z" fill="#eb3f25"/></svg>
<svg class="r" style="left:721px;top:287px;" width="26" height="32" viewBox="0 0 26 32"><path d="M3.2 3 H22.8 V19.4 L13 28.4 L3.2 19.4 Z" fill="#2b2b2b" stroke="#606366" stroke-width="2"/><path d="M7.2 12.9 H18.8" stroke="#606366" stroke-width="2"/></svg>
<svg class="r" style="left:721px;top:748.8px;" width="26" height="32" viewBox="0 0 26 32"><path d="M3.2 29 H22.8 V12.6 L13 3.4 L3.2 12.6 Z" fill="#2b2b2b" stroke="#606366" stroke-width="2"/><path d="M7.2 19.3 H18.8" stroke="#606366" stroke-width="2"/></svg>
<svg class="r" style="left:721px;top:859.2px;" width="26" height="32" viewBox="0 0 26 32"><path d="M3.2 3 H22.8 V19.4 L13 28.4 L3.2 19.4 Z" fill="#2b2b2b" stroke="#606366" stroke-width="2"/><path d="M7.2 12.9 H18.8" stroke="#606366" stroke-width="2"/></svg>
<svg class="r" style="left:721px;top:956.8px;" width="26" height="32" viewBox="0 0 26 32"><path d="M3.2 29 H22.8 V12.6 L13 3.4 L3.2 12.6 Z" fill="#2b2b2b" stroke="#606366" stroke-width="2"/><path d="M7.2 19.3 H18.8" stroke="#606366" stroke-width="2"/></svg>
<svg class="r" style="left:668px;top:852px;" width="24" height="32" viewBox="0 0 24 32"><path d="M2 2.8 L21.2 16.3 L2 29.8 Z" fill="#499c54"/></svg>
<svg class="r" style="left:764px;top:968px;" width="24" height="32" viewBox="0 0 24 32"><circle cx="11.8" cy="12.8" r="10.4" fill="#f0a732"/><path d="M5.6 19 H18 L16.4 23.4 H7.2 Z" fill="#f0a732"/><path d="M7 25.6 H16.6 M8 29 H15.6" stroke="#cfd0d1" stroke-width="1.7"/></svg>
<span class="t" style="left:9.91px;top:201.40px;font-family:'Liberation Sans',sans-serif;font-size:22.9px;color:#ececec;letter-spacing:0.222px;transform-origin:0 0;transform:rotate(-90deg);">Project</span>
<svg class="r" style="left:9.8px;top:214px;" width="22.4" height="18" viewBox="0 0 22.4 18"><path d="M0 0 H8.6 L11.4 3.6 H22.2 V18 H0 Z" fill="#afb1b3"/></svg>
<span class="t" style="left:9.91px;top:355.20px;font-family:'Liberation Sans',sans-serif;font-size:22.9px;color:#bbbbbb;letter-spacing:0.105px;transform-origin:0 0;transform:rotate(-90deg);">Commit</span>
<svg class="r" style="left:8px;top:366px;" width="27" height="20" viewBox="0 0 27 20"><circle cx="13" cy="10.1" r="6" fill="none" stroke="#afb1b3" stroke-width="4.2"/><path d="M0 10.1 H5.4 M20.6 10.1 H26.2" stroke="#afb1b3" stroke-width="4.2"/></svg>
<span class="t" style="left:9.91px;top:569.60px;font-family:'Liberation Sans',sans-serif;font-size:22.9px;color:#bbbbbb;letter-spacing:-0.224px;transform-origin:0 0;transform:rotate(-90deg);">Pull Requests</span>
<svg class="r" style="left:12px;top:580px;" width="22" height="23" viewBox="0 0 22 23"><rect x="0" y="0.1" width="4.05" height="21.9" fill="#afb1b3"/><path d="M4.5 8.1 L12.1 1 V6 H20.1 V20 H16 V10.3 H12.1 V15.2 Z" fill="#afb1b3"/></svg>
<span class="t" style="left:9.91px;top:1270.20px;font-family:'Liberation Sans',sans-serif;font-size:22.9px;color:#bbbbbb;letter-spacing:0.337px;transform-origin:0 0;transform:rotate(-90deg);">Structure</span>
<svg class="r" style="left:12px;top:1281px;" width="19" height="20" viewBox="0 0 19 20"><rect x="10" y="1.1" width="8" height="8" fill="#afb1b3"/><rect x="0" y="11.1" width="8" height="7.9" fill="#afb1b3"/><rect x="10" y="11.1" width="8" height="7.9" fill="#afb1b3"/></svg>
<span class="t" style="left:9.91px;top:1457.20px;font-family:'Liberation Sans',sans-serif;font-size:22.9px;color:#bbbbbb;letter-spacing:-0.091px;transform-origin:0 0;transform:rotate(-90deg);">Bookmarks</span>
<svg class="r" style="left:12px;top:1468px;" width="19" height="22" viewBox="0 0 19 22"><path d="M0 0 H18 V22 H0 L7.4 11 Z" fill="#afb1b3"/></svg>
<span class="t" style="left:9.91px;top:1624.20px;font-family:'Liberation Sans',sans-serif;font-size:22.9px;color:#bbbbbb;letter-spacing:-0.488px;transform-origin:0 0;transform:rotate(-90deg);">OpenAPI</span>
<div class="r" style="left:7.6px;top:1632px;width:22.4px;height:22px;border:2px solid #000;border-radius:3px;background:#404447;"></div>
<div class="r" style="left:8.6px;top:1633px;width:24.4px;height:5.2px;background:#000;"></div>
<div class="r" style="left:24.8px;top:1634.6px;width:1.5px;height:1.5px;background:#4a4e52;"></div>
<div class="r" style="left:27.7px;top:1634.6px;width:1.5px;height:1.5px;background:#4a4e52;"></div>
<div class="r" style="left:30.6px;top:1634.6px;width:1.5px;height:1.5px;background:#4a4e52;"></div>
<span class="t" style="left:11.00px;top:1639.32px;font-family:'Liberation Sans',sans-serif;font-size:14.5px;font-weight:700;color:#000;transform:scaleX(.9) skewX(-6deg);transform-origin:0 100%;">/</span>
<span class="t" style="left:15.00px;top:1641.99px;font-family:'Liberation Sans',sans-serif;font-size:10.4px;font-weight:700;color:#000;transform:scaleX(.8);transform-origin:0 0;">API</span>
<svg class="r" style="left:3039.8px;top:134px;" width="22.4" height="26" viewBox="0 0 22.4 26"><path d="M0 6.2 C3 11.0 19.4 11.0 22.4 6.2 V10.0 C19.4 14.8 3 14.8 0 10.0 Z" fill="#afb1b3"/><path d="M0 12.0 C3 16.8 19.4 16.8 22.4 12.0 V15.8 C19.4 20.6 3 20.6 0 15.8 Z" fill="#afb1b3"/><path d="M0 17.8 C3 22.6 19.4 22.6 22.4 17.8 V21.6 C19.4 26.4 3 26.4 0 21.6 Z" fill="#afb1b3"/><ellipse cx="11.2" cy="3.9" rx="11.2" ry="3.7" fill="#afb1b3"/></svg>
<span class="t" style="left:3062.39px;top:168.20px;font-family:'Liberation Sans',sans-serif;font-size:22.9px;color:#bbbbbb;letter-spacing:-0.289px;transform-origin:0 0;transform:rotate(90deg);">Database</span>
<span class="t" style="left:3040.40px;top:1100.71px;font-family:'Liberation Sans',sans-serif;font-size:22.9px;font-weight:700;color:#afb1b3;">M</span>
<span class="t" style="left:3062.39px;top:1133.20px;font-family:'Liberation Sans',sans-serif;font-size:22.9px;color:#bbbbbb;letter-spacing:-0.198px;transform-origin:0 0;transform:rotate(90deg);">make</span>
<div class="r" style="left:3038px;top:1232px;width:22px;height:21.6px;border:2px solid #000;border-radius:3px;background:#404447;"></div>
<div class="r" style="left:3039px;top:1233px;width:24px;height:5.2px;background:#000;"></div>
<div class="r" style="left:3054.8px;top:1234.6px;width:1.5px;height:1.5px;background:#4a4e52;"></div>
<div class="r" style="left:3057.7000000000003px;top:1234.6px;width:1.5px;height:1.5px;background:#4a4e52;"></div>
<div class="r" style="left:3060.6000000000004px;top:1234.6px;width:1.5px;height:1.5px;background:#4a4e52;"></div>
<span class="t" style="left:3041.40px;top:1238.92px;font-family:'Liberation Sans',sans-serif;font-size:14.5px;font-weight:700;color:#000;transform:scaleX(.9) skewX(-6deg);transform-origin:0 100%;">/</span>
<span class="t" style="left:3045.40px;top:1241.59px;font-family:'Liberation Sans',sans-serif;font-size:10.4px;font-weight:700;color:#000;transform:scaleX(.8);transform-origin:0 0;">API</span>
<span class="t" style="left:3062.39px;top:1265.00px;font-family:'Liberation Sans',sans-serif;font-size:22.9px;color:#bbbbbb;letter-spacing:-0.040px;transform-origin:0 0;transform:rotate(90deg);">API Security Audit</span>
<svg class="r" style="left:3039px;top:1497px;" width="24" height="26" viewBox="0 0 24 26"><path d="M12 0.8 C16.4 0.8 19.4 3.8 19.8 8 L20.6 13.6 L23.2 18 V19.4 H0.8 V18 L3.4 13.6 L4.2 8 C4.6 3.8 7.6 0.8 12 0.8 Z" fill="#afb1b3"/><path d="M8 21 H16 C15.6 23.4 14.2 25 12 25 C9.8 25 8.4 23.4 8 21 Z" fill="#afb1b3"/></svg>
<span class="t" style="left:3062.39px;top:1530.20px;font-family:'Liberation Sans',sans-serif;font-size:22.9px;color:#bbbbbb;letter-spacing:0.239px;transform-origin:0 0;transform:rotate(90deg);">Notifications</span>
<svg class="r" style="left:61px;top:1690.6px;" width="19.0" height="25.0" viewBox="0 0 19 25"><circle cx="4.4" cy="4" r="3.4" fill="#afb1b3"/><circle cx="4.4" cy="20.6" r="3.4" fill="#afb1b3"/><circle cx="14.6" cy="7.2" r="3.2" fill="#afb1b3"/><path d="M4.4 4 V20.6 M14.6 7.2 C14.6 12.4 11.4 14.2 4.6 15.4" fill="none" stroke="#afb1b3" stroke-width="3"/></svg>
<span class="t" style="left:91.80px;top:1690.90px;font-family:'Liberation Sans',sans-serif;font-size:22.8px;color:#bbbbbb;letter-spacing:0.633px;">Git</span>
<svg class="r" style="left:163px;top:1692px;" width="18" height="22" viewBox="0 0 18 22"><path d="M1 1.2 L16.8 11 L1 20.8 Z" fill="#afb1b3"/></svg>
<span class="t" style="left:193.60px;top:1690.90px;font-family:'Liberation Sans',sans-serif;font-size:22.8px;color:#bbbbbb;letter-spacing:-0.712px;">Run</span>
<svg class="r" style="left:273px;top:1693px;" width="22" height="19" viewBox="0 0 22 19"><path d="M0.7 1 H4.7 V4.6 H0.7 Z M7.4 1 H21.2 V4.6 H7.4 Z M0.7 7.7 H4.7 V11.3 H0.7 Z M7.4 7.7 H21.2 V11.3 H7.4 Z M0.7 14.4 H4.7 V18 H0.7 Z M7.4 14.4 H21.2 V18 H7.4 Z" fill="#afb1b3"/></svg>
<span class="t" style="left:303.80px;top:1690.90px;font-family:'Liberation Sans',sans-serif;font-size:22.8px;color:#bbbbbb;letter-spacing:-1.016px;">TODO</span>
<svg class="r" style="left:408px;top:1690px;" width="23" height="23" viewBox="0 0 23 23"><circle cx="11.2" cy="11.4" r="10.5" fill="#afb1b3"/><rect x="9.4" y="4.8" width="3.8" height="8.2" fill="#3c3f41"/><rect x="9.4" y="14.6" width="3.8" height="3.6" fill="#3c3f41"/></svg>
<span class="t" style="left:439.60px;top:1690.90px;font-family:'Liberation Sans',sans-serif;font-size:22.8px;color:#bbbbbb;letter-spacing:-0.013px;">Problems</span>
<svg class="r" style="left:580px;top:1691px;" width="23" height="21" viewBox="0 0 23 21"><rect x="0" y="0.8" width="22" height="20" fill="#afb1b3"/><path d="M4 4.8 L9.4 9.2 L4 13.8" fill="none" stroke="#3c3f41" stroke-width="2.2"/><path d="M10.8 15.4 H18" stroke="#3c3f41" stroke-width="2.2"/></svg>
<span class="t" style="left:612.60px;top:1690.90px;font-family:'Liberation Sans',sans-serif;font-size:22.8px;color:#bbbbbb;letter-spacing:-0.193px;">Terminal</span>
<div class="r" style="left:2818px;top:1690px;width:22px;height:21.6px;border:2px solid #000;border-radius:3px;background:#404447;"></div>
<div class="r" style="left:2819px;top:1691px;width:24px;height:5.2px;background:#000;"></div>
<div class="r" style="left:2834.8px;top:1692.6px;width:1.5px;height:1.5px;background:#4a4e52;"></div>
<div class="r" style="left:2837.7000000000003px;top:1692.6px;width:1.5px;height:1.5px;background:#4a4e52;"></div>
<div class="r" style="left:2840.6000000000004px;top:1692.6px;width:1.5px;height:1.5px;background:#4a4e52;"></div>
<span class="t" style="left:2821.40px;top:1696.92px;font-family:'Liberation Sans',sans-serif;font-size:14.5px;font-weight:700;color:#000;transform:scaleX(.9) skewX(-6deg);transform-origin:0 100%;">/</span>
<span class="t" style="left:2825.40px;top:1699.59px;font-family:'Liberation Sans',sans-serif;font-size:10.4px;font-weight:700;color:#000;transform:scaleX(.8);transform-origin:0 0;">API</span>
<span class="t" style="left:2851.60px;top:1690.90px;font-family:'Liberation Sans',sans-serif;font-size:22.8px;color:#bbbbbb;letter-spacing:0.047px;">Audit Problems</span>
<svg class="r" style="left:12px;top:1731px;" width="26" height="26" viewBox="0 0 26 26"><rect x="5" y="1.9" width="18.2" height="18.2" fill="none" stroke="#afb1b3" stroke-width="2.2"/><path d="M1.1 5 V23.9 H20" fill="none" stroke="#afb1b3" stroke-width="2.2"/></svg>
<span class="t" style="left:2589.20px;top:1732.30px;font-family:'Liberation Sans',sans-serif;font-size:22.8px;color:#bbbbbb;letter-spacing:-1.324px;">17:1</span>
<span class="t" style="left:2651.20px;top:1732.30px;font-family:'Liberation Sans',sans-serif;font-size:22.8px;color:#bbbbbb;letter-spacing:-0.405px;">LF</span>
<span class="t" style="left:2698.80px;top:1732.30px;font-family:'Liberation Sans',sans-serif;font-size:22.8px;color:#bbbbbb;letter-spacing:0.753px;">UTF-8</span>
<span class="t" style="left:2790.20px;top:1732.30px;font-family:'Liberation Sans',sans-serif;font-size:22.8px;color:#bbbbbb;letter-spacing:-0.379px;">Tab</span>
<svg class="r" style="left:2854.4px;top:1729.6px;" width="21.7" height="28.5" viewBox="0 0 19 25"><circle cx="4.4" cy="4" r="3.4" fill="#afb1b3"/><circle cx="4.4" cy="20.6" r="3.4" fill="#afb1b3"/><circle cx="14.6" cy="7.2" r="3.2" fill="#afb1b3"/><path d="M4.4 4 V20.6 M14.6 7.2 C14.6 12.4 11.4 14.2 4.6 15.4" fill="none" stroke="#afb1b3" stroke-width="3"/></svg>
<span class="t" style="left:2883.40px;top:1732.30px;font-family:'Liberation Sans',sans-serif;font-size:22.8px;color:#bbbbbb;letter-spacing:0.345px;">master</span>
<svg class="r" style="left:2973px;top:1731px;" width="24" height="24" viewBox="0 0 24 24"><rect x="5.6" y="9.6" width="17.6" height="13.4" fill="#afb1b3"/><path d="M2.6 11 V7 C2.6 3.6 4.6 2 7 2 C9.4 2 11.4 3.6 11.4 7 V10" fill="none" stroke="#afb1b3" stroke-width="2.8"/></svg>
<svg class="r" style="left:3016px;top:1726px;" width="40" height="38" viewBox="0 0 40 38"><g transform="translate(-3016,-1726)"><circle cx="3028.2" cy="1742.2" r="8.2" fill="#afb1b3"/><circle cx="3035.2" cy="1738.3" r="8.5" fill="#afb1b3"/><circle cx="3043.4" cy="1742.6" r="6.8" fill="#afb1b3"/><rect x="3028" y="1742" width="16" height="8.2" fill="#afb1b3"/><circle cx="3045" cy="1753" r="8.6" fill="#3c3f41"/><path d="M3043.46 1748.35 L3043.52 1746.26 L3046.48 1746.26 L3046.54 1748.35 L3048.26 1749.34 L3050.09 1748.35 L3051.58 1750.92 L3049.80 1752.01 L3049.80 1753.99 L3051.58 1755.08 L3050.09 1757.65 L3048.26 1756.66 L3046.54 1757.65 L3046.48 1759.74 L3043.52 1759.74 L3043.46 1757.65 L3041.74 1756.66 L3039.91 1757.65 L3038.42 1755.08 L3040.20 1753.99 L3040.20 1752.01 L3038.42 1750.92 L3039.91 1748.35 L3041.74 1749.34 Z" fill="#afb1b3" stroke="#afb1b3" stroke-width="0.6" stroke-linejoin="round"/><circle cx="3045" cy="1753" r="2.3" fill="#3c3f41"/></g></svg>
<span class="t" style="left:3029.60px;top:1729.85px;font-family:'Liberation Sans',sans-serif;font-size:18.6px;color:#3c3f41;">?</span>
</div>
<div class="r" style="left:0;top:0;width:3068px;height:1760px;border:2px solid #606366;border-top-color:#8b8d8f;border-radius:20px;box-shadow:0 0 0 1.6px #0b0b0b;"></div>
</body></html>
